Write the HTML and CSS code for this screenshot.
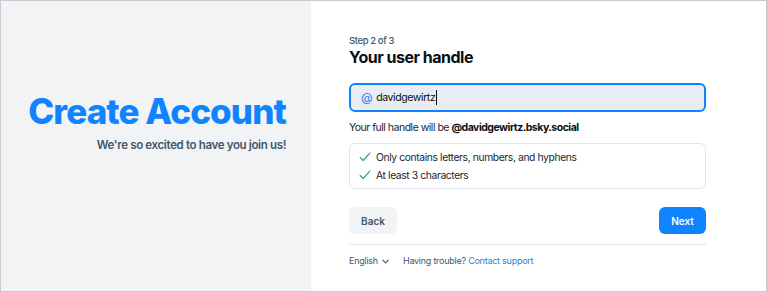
FILE: index.html
```html
<!DOCTYPE html>
<html>
<head>
<meta charset="utf-8">
<link rel="stylesheet" href="styles.css">
</head>
<body>
<div class="frame">
  <aside class="intro">
    <h1 class="intro-title">Create Account</h1>
    <p class="intro-sub">We're so excited to have you join us!</p>
  </aside>
  <main class="form">
    <div class="step">Step 2 of 3</div>
    <h2 class="form-title">Your user handle</h2>
    <div class="field">
      <span class="at">@</span>
      <span class="value">davidgewirtz</span><span class="caret"></span>
    </div>
    <p class="full">Your full handle will be <b>@davidgewirtz.bsky.social</b></p>
    <ul class="checks">
      <li><svg class="tick" viewBox="0 0 16 16"><path d="M2.5 8.6 L6 12 L13.5 3.5" fill="none" stroke="#3aa26b" stroke-width="1.4" stroke-linecap="round" stroke-linejoin="round"/></svg>Only contains letters, numbers, and hyphens</li>
      <li><svg class="tick" viewBox="0 0 16 16"><path d="M2.5 8.6 L6 12 L13.5 3.5" fill="none" stroke="#3aa26b" stroke-width="1.4" stroke-linecap="round" stroke-linejoin="round"/></svg>At least 3 characters</li>
    </ul>
    <div class="actions">
      <button class="btn btn-back">Back</button>
      <button class="btn btn-next">Next</button>
    </div>
    <div class="footer">
      <span class="lang">English <svg class="chev" viewBox="0 0 10 10"><path d="M2 3.5 L5 6.5 L8 3.5" fill="none" stroke="#42576c" stroke-width="1.2" stroke-linecap="round" stroke-linejoin="round"/></svg></span>
      <span class="help">Having trouble? <a class="link">Contact support</a></span>
    </div>
  </main>
</div>
</body>
</html>
```
FILE: styles.css
```css
* { box-sizing: border-box; }
html, body { margin: 0; padding: 0; }
body {
  font-family: Inter, "Noto Sans", sans-serif;
  background: #fff;
}
.frame {
  width: 768px;
  height: 292px;
  display: flex;
  border: 1px solid #c8ccd0;
  border-right-width: 2px;
}
.intro {
  width: 310px;
  background: #f1f3f5;
  display: flex;
  flex-direction: column;
  align-items: flex-end;
  justify-content: center;
  padding: 0 25px 51px 0;
}
.intro-title {
  margin: 0;
  font-size: 35px;
  font-weight: 800;
  color: #1083fe;
  letter-spacing: -0.9px;
  line-height: 44px;
}
.intro-sub {
  margin: 5px 0 0;
  font-size: 11.5px;
  font-weight: 600;
  letter-spacing: -0.35px;
  color: #42576c;
}
.form {
  flex: 1;
  padding: 33px 60px 0 38px;
  display: flex;
  flex-direction: column;
}
.step {
  font-size: 9.5px;
  font-weight: 500;
  letter-spacing: -0.4px;
  color: #42576c;
  line-height: 14px;
}
.form-title {
  margin: 0;
  font-size: 16px;
  font-weight: 700;
  letter-spacing: -0.5px;
  color: #0b0f14;
  line-height: 19px;
}
.field {
  margin-top: 16px;
  height: 29px;
  border: 2px solid #1083fe;
  border-radius: 6px;
  background: #e9edf1;
  display: flex;
  align-items: center;
  padding-left: 10px;
  font-size: 10.5px;
  letter-spacing: -0.4px;
  color: #0b0f14;
}
.at {
  color: #1083fe;
  font-size: 12px;
  margin-right: 4px;
}
.caret {
  width: 1px;
  height: 15px;
  background: #0b0f14;
  margin-left: 1px;
}
.full {
  margin: 8px 0 0;
  font-size: 10.5px;
  letter-spacing: -0.5px;
  color: #1b2631;
  line-height: 16px;
}
.full b { font-weight: 700; color: #0b0f14; }
.checks {
  list-style: none;
  margin: 7px 0 0;
  padding: 4px 8px;
  border: 1px solid #e1e6ea;
  border-radius: 6px;
}
.checks li {
  display: flex;
  align-items: center;
  gap: 4px;
  font-size: 10.3px;
  letter-spacing: -0.38px;
  color: #1b2631;
  line-height: 18px;
}
.tick { width: 14px; height: 14px; }
.actions {
  margin-top: 18px;
  display: flex;
  justify-content: space-between;
}
.btn {
  border: none;
  border-radius: 6px;
  height: 27px;
  font-family: inherit;
  font-size: 10px;
  font-weight: 600;
  padding: 0;
}
.btn-back { background: #f1f3f5; color: #42576c; width: 48px; }
.btn-next { background: #1083fe; color: #fff; width: 47px; }
.footer {
  margin-top: 10px;
  border-top: 1px solid #e1e6ea;
  padding-top: 9px;
  display: flex;
  gap: 13px;
  font-size: 9px;
  letter-spacing: -0.25px;
  color: #42576c;
  line-height: 14px;
}
.lang { display: inline-flex; align-items: center; gap: 3px; }
.chev { width: 9px; height: 9px; }
.link { color: #2a7fd0; }
```
